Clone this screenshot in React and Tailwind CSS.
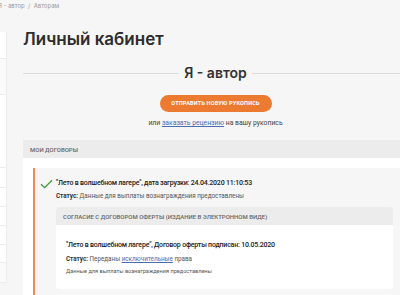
export default function App() {
  const sideRows = [
    { h: "h-[27px]", bg: "bg-white" },
    { h: "h-[36px]", bg: "bg-[#fafafa]" },
    { h: "h-[73px]", bg: "bg-white" },
    { h: "h-[20px]", bg: "bg-white" },
    { h: "h-[19px]", bg: "bg-white" },
    { h: "h-[19px]", bg: "bg-white" },
    { h: "h-[19px]", bg: "bg-white" },
    { h: "h-[18px]", bg: "bg-white" },
    { h: "h-[20px]", bg: "bg-[#fafafa]" },
  ];

  return (
    <div className="w-[400px] h-[295px] overflow-hidden bg-[#f6f6f6] font-['Roboto',sans-serif] text-[#333]">
      <div className="h-[12px] -ml-[2px] pt-[1px] text-[6px] leading-[9px] text-[#9a9a9a] font-['Inter',sans-serif]">
        Я - автор&nbsp; / &nbsp;Авторам
      </div>

      <div className="flex">
        <aside className="w-[7px] shrink-0 mt-[20px] border-r border-[#ececec] self-start">
          {sideRows.map((r, i) => (
            <div key={i} className={`${r.h} ${r.bg} border-b border-[#ececec]`} />
          ))}
        </aside>

        <main className="ml-[16px] w-[385px] shrink-0">
          <h1 className="mt-[16px] font-['Inter',sans-serif] font-semibold text-[17px] leading-[22px] text-[#2d2d2d]">
            Личный кабинет
          </h1>

          <div className="mt-[14px] flex items-center gap-[5px]">
            <div className="flex-1 h-px bg-[#dedede]" />
            <div className="font-['Inter',sans-serif] font-semibold text-[14px] leading-[18px] text-[#333]">
              Я - автор
            </div>
            <div className="flex-1 h-px bg-[#dedede]" />
          </div>

          <div className="mt-[13px] flex justify-center">
            <button className="w-[112px] h-[17px] rounded-full bg-[#ec7a31] text-white text-[5.5px] font-bold tracking-[0.2px] uppercase">
              Отправить новую рукопись
            </button>
          </div>

          <p className="mt-[6px] text-center text-[6.8px] leading-[10px] text-[#444]">
            или{" "}
            <a className="text-[#4a6cb3] underline decoration-[#4a6cb3]">заказать рецензию</a>{" "}
            на вашу рукопись
          </p>

          <section className="mt-[12px]">
            <div className="h-[18px] bg-[#ececec] pl-[7px] flex items-center text-[6px] font-medium uppercase text-[#666]">
              Мои договоры
            </div>
            <div className="bg-white pt-[10px] pl-[10px]">
              <div className="border-l-2 border-[#f08a4b] bg-[#f6f6f6] pt-[10px] pl-[5px] pr-[5px] pb-[10px]">
                <div className="flex items-center">
                  <svg width="13" height="10" viewBox="0 0 13 10" className="shrink-0">
                    <path d="M1 5.2 L4.6 8.6 L12 1.2" fill="none" stroke="#3c9a3c" strokeWidth="1.3" />
                  </svg>
                  <div className="ml-[3px] text-[7px] leading-[11px] tracking-[-0.2px] font-medium text-[#222] whitespace-nowrap">
                    "Лето в волшебном лагере", дата загрузки: 24.04.2020 11:10:53
                  </div>
                </div>
                <div className="ml-[16px] mt-[3px] text-[6.3px] leading-[9px] text-[#555] whitespace-nowrap">
                  <b className="text-[#333]">Статус:</b> Данные для выплаты вознаграждения предоставлены
                </div>

                <div className="ml-[16px] mt-[6px] w-[337px] rounded-[3px] overflow-hidden">
                  <div className="h-[18px] bg-[#ececec] pl-[7px] flex items-center text-[6px] font-medium uppercase text-[#666] whitespace-nowrap">
                    Согласие с договором оферты (издание в электронном виде)
                  </div>
                  <div className="bg-white pl-[10px] pt-[15px] pb-[14px]">
                    <div className="text-[7px] leading-[11px] tracking-[-0.2px] font-medium text-[#222] whitespace-nowrap">
                      "Лето в волшебном лагере", Договор оферты подписан: 10.05.2020
                    </div>
                    <div className="mt-[4px] text-[6.3px] leading-[9px] text-[#555] whitespace-nowrap">
                      <b className="text-[#333]">Статус:</b> Переданы{" "}
                      <a className="text-[#4a6cb3] underline">исключительные</a> права
                    </div>
                    <div className="mt-[3px] text-[5.6px] leading-[8px] text-[#555] whitespace-nowrap">
                      Данные для выплаты вознаграждения предоставлены
                    </div>
                  </div>
                </div>
              </div>
            </div>
          </section>
        </main>
      </div>
    </div>
  );
}
